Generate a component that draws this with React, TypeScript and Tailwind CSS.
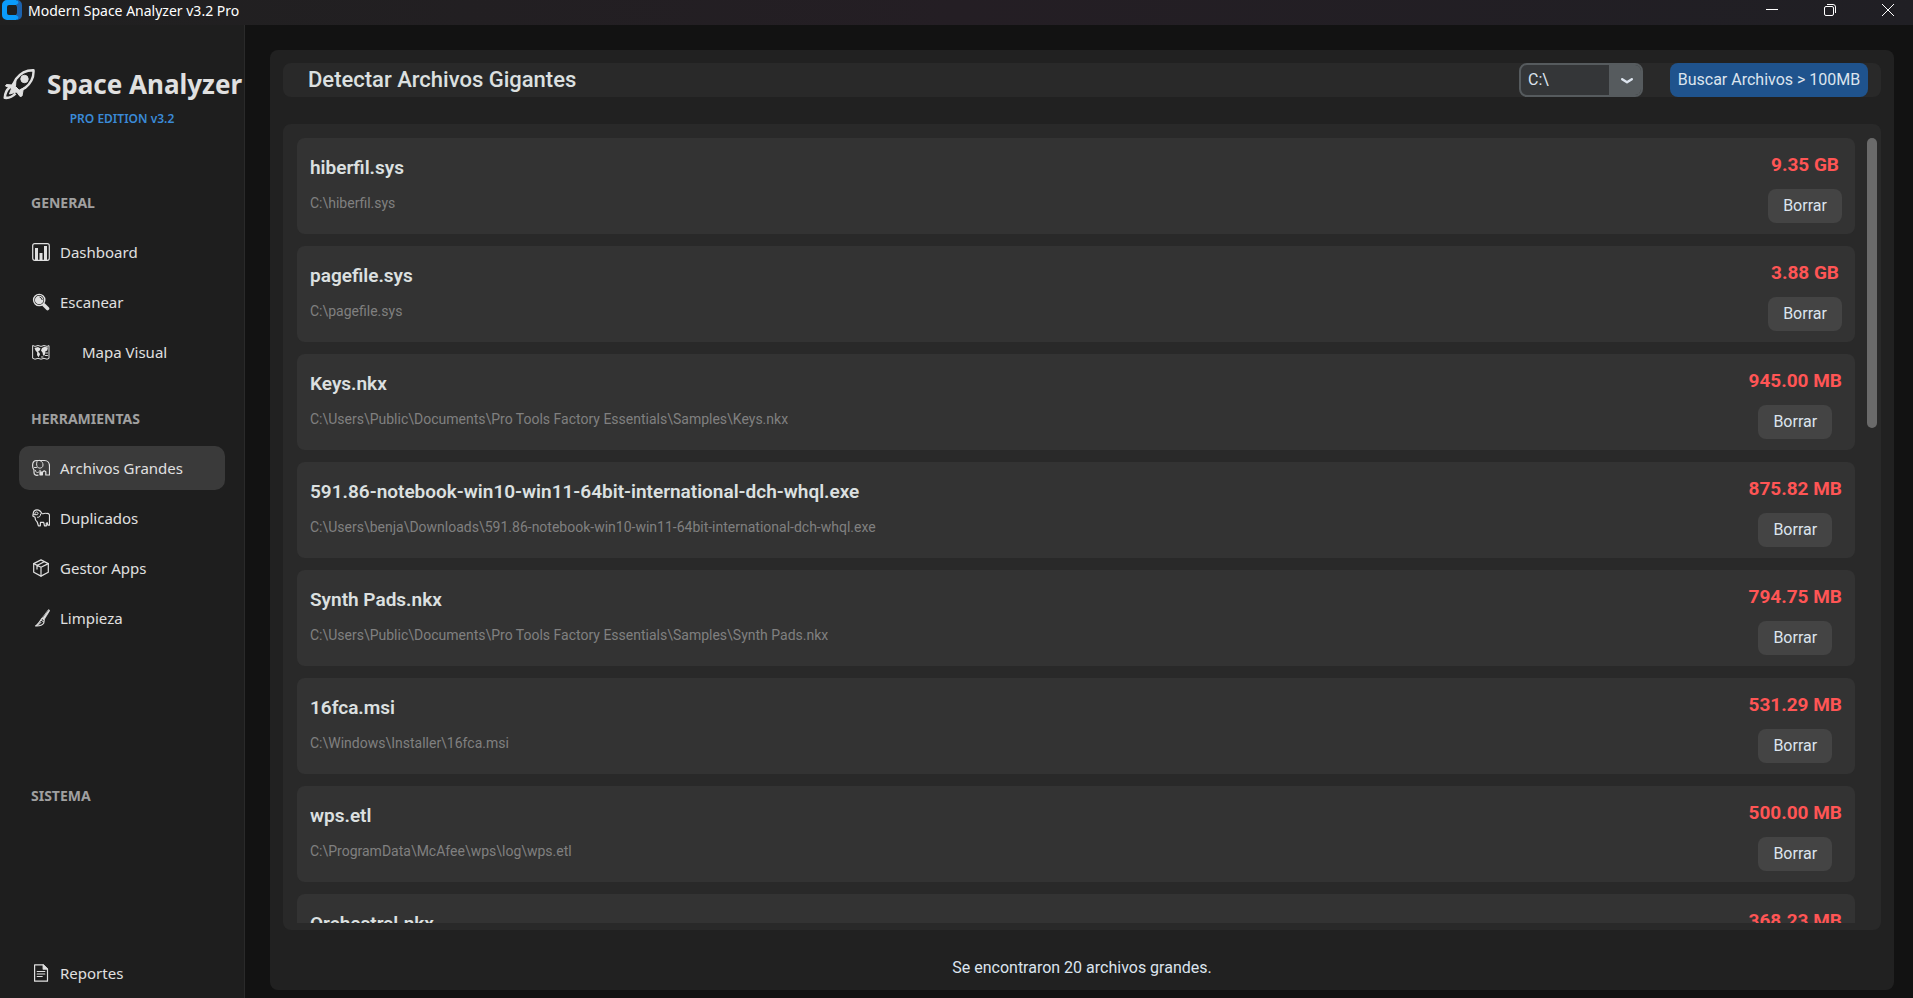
import { useState, type ReactNode } from "react";

type FileRow = { name: string; path: string; size: string };

const files: FileRow[] = [
  { name: "hiberfil.sys", path: "C:\\hiberfil.sys", size: "9.35 GB" },
  { name: "pagefile.sys", path: "C:\\pagefile.sys", size: "3.88 GB" },
  { name: "Keys.nkx", path: "C:\\Users\\Public\\Documents\\Pro Tools Factory Essentials\\Samples\\Keys.nkx", size: "945.00 MB" },
  {
    name: "591.86-notebook-win10-win11-64bit-international-dch-whql.exe",
    path: "C:\\Users\\benja\\Downloads\\591.86-notebook-win10-win11-64bit-international-dch-whql.exe",
    size: "875.82 MB",
  },
  { name: "Synth Pads.nkx", path: "C:\\Users\\Public\\Documents\\Pro Tools Factory Essentials\\Samples\\Synth Pads.nkx", size: "794.75 MB" },
  { name: "16fca.msi", path: "C:\\Windows\\Installer\\16fca.msi", size: "531.29 MB" },
  { name: "wps.etl", path: "C:\\ProgramData\\McAfee\\wps\\log\\wps.etl", size: "500.00 MB" },
  { name: "Orchestral.nkx", path: "C:\\Users\\Public\\Documents\\Pro Tools Factory Essentials\\Samples\\Orchestral.nkx", size: "368.23 MB" },
];

function Glyph({ children }: { children: ReactNode }) {
  return (
    <svg viewBox="0 0 18 18" className="size-[18px] shrink-0" fill="none" stroke="currentColor" strokeWidth="1.2" strokeLinejoin="round" strokeLinecap="round" aria-hidden="true">
      {children}
    </svg>
  );
}

const icons = {
  chart: (
    <Glyph>
      <rect x="0.7" y="0.7" width="16.6" height="16.6" rx="2" />
      <path d="M3 5h3v12H3zM7.5 10h3v7h-3zM12 3h3v14h-3z" fill="currentColor" stroke="none" />
    </Glyph>
  ),
  search: (
    <Glyph>
      <circle cx="7.200" cy="7" r="5.600" strokeWidth="1.400" />
      <circle cx="7.200" cy="7" r="4.300" fill="currentColor" stroke="none" />
      <path d="M8 4.200q2 .6 2.200 2.400" stroke="#1e1e1e" strokeWidth="1" />
      <path d="M12 12l3.500 3.500" strokeWidth="3.600" />
    </Glyph>
  ),
  map: (
    <Glyph>
      <path d="M1 2.600l2 .8 3-.9 3 .9 3-.9 3 .9 2-.8v12.800l-2 .8-3-.9-3 .9-3-.9-3 .9-2-.8z" strokeWidth="1" />
      <path d="M2.500 5l3.500-1 2.500 1.500-.8 2-1.700 1.200 1.600 1.200.4 1.600-1.500 2.700-1.500-2.200.2-2.500L3.500 7.500zM9 7.500l1-2.500 2.500-1.200 3.500.6-.8 3-2 1 .3 1.600-1.200 2.700-1.300-.4-.4-2.500z" fill="currentColor" stroke="none" />
      <path d="M14 10h1.500M13.500 12.500h2M9.500 14h1.500" strokeWidth="1" />
    </Glyph>
  ),
  elephant: (
    <Glyph>
      <path d="M6 16.200c-2.500.5-4-.6-4-2.700V11C.6 9.500.4 7 .8 4.500 1.200 2.300 2.500 1.400 4.500 1.500h8c3 0 5 2.500 5 5.500v9h-3.700v-3.200l-1.600-1-1.800 1.400v2.600H8v-4.500" />
      <path d="M5 2.500c-.8 2.500-.6 5 1.500 6.500 2.500.5 4.500-.5 4.500-3 0-2-1-3.500-3-4.500M3.500 11.500c.6 2.200 1.500 2.500 3 1.700M2.500 8.500h2" strokeWidth="1" />
      <path d="M8 12.500h2.500V16H8z" fill="currentColor" stroke="none" />
    </Glyph>
  ),
  sheep: (
    <Glyph>
      <path d="M1.200 4.500L.8 7l2.200 1.200c0 2.300.8 3.800 2.200 4.800l1.200 3.800h1.900l.2-3.500h3.200l.8 3.500h1.900l-.2-2.300 1-.9.600 2.600h1.700V7.500c.3-2-.8-3.300-2.500-3-2-.8-3.500.5-5 .2C9 2.500 7.300.8 5 .8 3 .8 1.500 2.400 1.200 4.500z" />
      <path d="M3 5.500c-.5-1.500.5-2.600 1.800-2.500 1.500.2 1.700 2.100.4 2.700H1.500M5.500 8.300C8 8.600 8.500 6.800 8.600 5" strokeWidth="1" />
    </Glyph>
  ),
  box: (
    <Glyph>
      <path d="M9 .9l7.300 3.700v8.600L9 17.100l-7.300-3.900V4.600z" />
      <path d="M1.700 4.600L9 8.300l7.300-3.700M9 8.300v8.800M12.200 2.700L5 6.500v3.600" />
    </Glyph>
  ),
  broom: (
    <Glyph>
      <path d="M16.800.8l1 .6-5.600 9.200-1.900-1.200z" fill="currentColor" strokeWidth=".7" />
      <path d="M10 9.300l2.200 1.400-.4 3.300c-1.500 2.200-4.300 3.200-8.300 2.900 2.700-1.500 4.500-4.900 6.500-7.600z" />
      <path d="M9.500 11.500l2 1.300M6.500 15.800l2.500-2.500" strokeWidth="1" />
    </Glyph>
  ),
  report: (
    <Glyph>
      <path d="M2.600.8h8.600l4.300 4.300v12.100H2.600z" />
      <path d="M11.200.8v4.300h4.300z" fill="currentColor" />
      <path d="M5.200 7.500h7.600M5.200 10h7.600M5.200 12.500h5" />
    </Glyph>
  ),
};

function Rocket() {
  return (
    <svg viewBox="0 0 32 32" className="size-8 shrink-0" fill="none" stroke="currentColor" strokeLinejoin="round" aria-hidden="true">
      <path d="M30.500 2.200C23.500 2 17.500 5 13 11l-3.500 6.500 5.500 6 7-3.500C27.500 15.500 31 9.500 30.500 2.200z" strokeWidth="2.400" />
      <circle cx="21.500" cy="11" r="3.700" fill="currentColor" />
      <path d="M13 11.500l-4 5.500-5.500-.5L2.500 18l7.500 3 4.500 4 2.500 3.500 2-.5 1-5.500 2-3.500-5.500 3.500-4-4z" fill="currentColor" strokeWidth="1" />
      <path d="M6.500 19.500C3.500 22 2 25 1.800 29.800c4 .4 8-1.300 10.700-4.300" strokeWidth="2.600" />
      <path d="M9.500 18.500l5.500 5-5 1.500-3.500 1 1.200-3.500z" fill="currentColor" strokeWidth="1" />
    </svg>
  );
}

function NavItem({ icon, label, active, wide }: { icon: ReactNode; label: string; active?: boolean; wide?: boolean }) {
  return (
    <button
      type="button"
      aria-current={active ? "page" : undefined}
      className={`flex h-11 shrink-0 items-center rounded-[10px] px-[13px] text-[#e0e0e0] ${active ? "bg-[#3a3a3a]" : ""} ${wide ? "gap-8" : "gap-[10px]"}`}
    >
      {icon}
      <span>{label}</span>
    </button>
  );
}

function NavHeading({ children }: { children: ReactNode }) {
  return <h2 className="px-3 text-sm leading-5 font-bold text-[#a0a0a0]">{children}</h2>;
}

function Sidebar() {
  return (
    <aside className="flex w-[245px] shrink-0 flex-col overflow-hidden border-r border-[#2a2a2a] bg-[#1e1e1e] font-['Noto_Sans',sans-serif] text-[15px]">
      <div className="mt-[39px] flex h-10 shrink-0 items-center gap-3 pl-[3px] text-[#e0e0e0]">
        <Rocket />
        <h1 className="text-[26px] leading-10 font-bold whitespace-nowrap">Space Analyzer</h1>
      </div>
      <p className="mt-[5px] text-center text-xs leading-5 font-semibold text-[#3a8ad6]">PRO EDITION v3.2</p>
      <nav className="mt-16 flex flex-1 flex-col px-[19px]">
        <NavHeading>GENERAL</NavHeading>
        <div className="mt-[17px] flex flex-col gap-[6px]">
          <NavItem icon={icons.chart} label="Dashboard" />
          <NavItem icon={icons.search} label="Escanear" />
          <NavItem icon={icons.map} label="Mapa Visual" wide />
        </div>
        <div className="mt-[35px]">
          <NavHeading>HERRAMIENTAS</NavHeading>
        </div>
        <div className="mt-[17px] flex flex-col gap-[6px]">
          <NavItem icon={icons.elephant} label="Archivos Grandes" active />
          <NavItem icon={icons.sheep} label="Duplicados" />
          <NavItem icon={icons.box} label="Gestor Apps" />
          <NavItem icon={icons.broom} label="Limpieza" />
        </div>
        <div className="flex flex-1 flex-col justify-center">
          <NavHeading>SISTEMA</NavHeading>
        </div>
        <div className="mb-[3px] flex flex-col">
          <NavItem icon={icons.report} label="Reportes" />
        </div>
      </nav>
    </aside>
  );
}

function TitleBar() {
  return (
    <header className="flex h-[25px] shrink-0 justify-between bg-linear-to-r from-[#202020] via-[#241e24] to-[#201f24] text-white">
      <div className="flex items-start gap-[6px] pl-[2px]">
        <svg viewBox="0 0 20 20" className="size-5" aria-hidden="true">
          <path d="M15 0a5 5 0 0 1 5 5v10a5 5 0 0 1-5 5l-1-5 1-2V7l-1-2z" fill="#1c62ad" />
          <path d="M5 0h9a3 3 0 0 1 2.500 3L14 5H7a2 2 0 0 0-2 2v6a2 2 0 0 0 2 2h7l2.500 2a3 3 0 0 1-2.500 3H5a5 5 0 0 1-5-5V5a5 5 0 0 1 5-5z" fill="#0a9bfb" />
        </svg>
        <span className="font-['Noto_Sans',sans-serif] text-sm leading-[22px]">Modern Space Analyzer v3.2 Pro</span>
      </div>
      <div className="flex">
        <button type="button" aria-label="Minimizar" className="flex h-5 w-[58px] items-center justify-center">
          <svg viewBox="0 0 12 12" className="size-3" stroke="currentColor"><path d="M0 5.500h12" /></svg>
        </button>
        <button type="button" aria-label="Restaurar" className="flex h-5 w-[58px] items-center justify-center">
          <svg viewBox="0 0 12 12" className="size-3" fill="none" stroke="currentColor">
            <rect x="0.5" y="2.5" width="9" height="9" rx="1.500" />
            <path d="M3 .5h6A2.500 2.500 0 0 1 11.500 3v6" />
          </svg>
        </button>
        <button type="button" aria-label="Cerrar" className="mr-[-4px] flex h-5 w-[58px] items-center justify-center">
          <svg viewBox="0 0 12 12" className="size-3" stroke="currentColor"><path d="M0 0l12 12M12 0L0 12" /></svg>
        </button>
      </div>
    </header>
  );
}

function FileCard({ file }: { file: FileRow }) {
  return (
    <li className="flex h-24 shrink-0 justify-between rounded-lg bg-[#333333] px-[13px]">
      <div className="min-w-0">
        <h3 className="mt-[18px] truncate text-[19px] leading-6 font-semibold text-[#dce0e0]">{file.name}</h3>
        <p className="mt-[11px] truncate text-sm leading-6 text-[#808080]">{file.path}</p>
      </div>
      <div className="flex flex-col items-center">
        <span className="mt-[15px] text-[19px] leading-6 font-bold text-[#ff5555]">{file.size}</span>
        <button type="button" className="mt-3 h-[34px] w-[74px] rounded-lg bg-[#444444] text-base text-[#dce4ee]">
          Borrar
        </button>
      </div>
    </li>
  );
}

export default function App() {
  const [drive, setDrive] = useState("C:\\");

  return (
    <div className="flex h-screen flex-col overflow-hidden bg-[#121212] font-[Roboto,sans-serif]">
      <TitleBar />
      <div className="flex min-h-0 flex-1">
        <Sidebar />
        <main className="mt-[25px] mr-[19px] mb-2 ml-[25px] flex min-w-0 flex-1 flex-col rounded-lg bg-[#212121] px-[13px] pt-[13px]">
          <div className="flex h-[34px] shrink-0 items-center rounded-lg bg-[#292929] pr-[13px] pl-[25px]">
            <h2 className="flex-1 text-[22px] leading-[34px] font-medium text-[#dce0e0]">Detectar Archivos Gigantes</h2>
            <div className="relative mr-[27px] h-[34px] w-[124px] overflow-hidden rounded-lg border-2 border-[#565b5e] bg-[#343638]">
              <select
                aria-label="Unidad"
                value={drive}
                onChange={(e) => setDrive(e.target.value)}
                className="h-full w-full appearance-none pl-[7px] text-base text-[#dce4ee] outline-none"
              >
                <option value={"C:\\"}>C:\</option>
                <option value={"D:\\"}>D:\</option>
              </select>
              <span className="pointer-events-none absolute inset-y-0 right-0 flex w-8 items-center justify-center bg-[#565b5e] pt-[2px] pl-[3px] text-[#dce4ee]">
                <svg viewBox="0 0 12 6" className="h-[6px] w-3" fill="none" stroke="currentColor" strokeWidth="2.400" strokeLinecap="round" strokeLinejoin="round">
                  <path d="M1.200 1.200L6 4.300l4.800-3.100" />
                </svg>
              </span>
            </div>
            <button type="button" className="h-[34px] w-[198px] rounded-lg bg-[#1f538d] text-base whitespace-nowrap text-[#dce4ee]">
              Buscar Archivos &gt; 100MB
            </button>
          </div>

          <section className="mt-[27px] flex min-h-0 flex-1 rounded-lg bg-[#292929] py-[14px] pr-1 pb-[7px] pl-[14px]">
            <ul className="flex min-w-0 flex-1 flex-col gap-3 overflow-hidden">
              {files.map((file) => (
                <FileCard key={file.path} file={file} />
              ))}
            </ul>
            <div className="ml-3 w-[10px]">
              <div className="h-[37%] rounded-full bg-[#6a6a6a]" />
            </div>
          </section>

          <p className="h-[60px] shrink-0 pt-[26px] text-center text-base leading-6 text-[#dce4ee]">Se encontraron 20 archivos grandes.</p>
        </main>
      </div>
    </div>
  );
}
